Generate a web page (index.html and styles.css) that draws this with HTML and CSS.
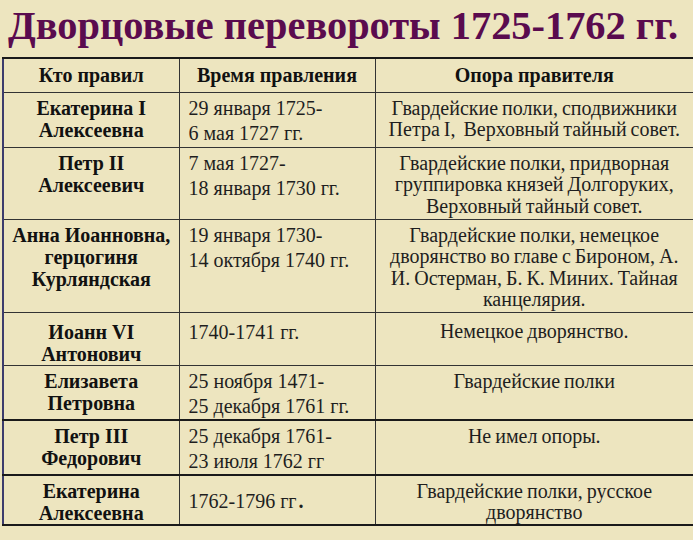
FILE: index.html
```html
<!DOCTYPE html>
<html lang="ru">
<head>
<meta charset="utf-8">
<link rel="stylesheet" href="styles.css">
</head>
<body>
<h1 class="title">Дворцовые перевороты 1725-1762 гг.</h1>
<table class="grid">
<colgroup><col class="c1"><col class="c2"><col class="c3"></colgroup>
<tr class="r-head"><th>Кто правил</th><th>Время правления</th><th>Опора правителя</th></tr>
<tr class="r1"><td class="name">Екатерина I<br>Алексеевна</td><td class="time">29 января 1725-<br>6 мая 1727 гг.</td><td class="base">Гвардейские полки, сподвижники<br>Петра I,&nbsp; Верховный тайный совет.</td></tr>
<tr class="r2"><td class="name">Петр II<br>Алексеевич</td><td class="time">7 мая 1727-<br>18 января 1730 гг.</td><td class="base">Гвардейские полки, придворная<br>группировка князей Долгоруких,<br>Верховный тайный совет.</td></tr>
<tr class="r3"><td class="name">Анна Иоанновна,<br>герцогиня<br>Курляндская</td><td class="time">19 января 1730-<br>14 октября 1740 гг.</td><td class="base">Гвардейские полки, немецкое<br>дворянство во главе с Бироном, А.<br>И. Остерман, Б. К. Миних. Тайная<br>канцелярия.</td></tr>
<tr class="r4"><td class="name">Иоанн VI<br>Антонович</td><td class="time">1740-1741 гг.</td><td class="base">Немецкое дворянство.</td></tr>
<tr class="r5 thick"><td class="name">Елизавета<br>Петровна</td><td class="time">25 ноября 1471-<br>25 декабря 1761 гг.</td><td class="base">Гвардейские полки</td></tr>
<tr class="r6 thick"><td class="name">Петр III<br>Федорович</td><td class="time">25 декабря 1761-<br>23 июля 1762 гг</td><td class="base">Не имел опоры.</td></tr>
<tr class="r7"><td class="name">Екатерина<br>Алексеевна</td><td class="time">1762-1796 гг<span class="dot">.</span></td><td class="base">Гвардейские полки, русское<br>дворянство</td></tr>
</table>
</body>
</html>
```
FILE: styles.css
```css
html, body {
  margin: 0;
  padding: 0;
  background: #ede5bf;
}
body {
  width: 693px;
  height: 540px;
  overflow: hidden;
  font-family: "Liberation Serif", "Times New Roman", serif;
  color: #1a1a1a;
}
.title {
  margin: 0;
  padding: 5px 0 0 8px;
  height: 51px;
  box-sizing: border-box;
  font-family: "Liberation Serif", "Times New Roman", serif;
  font-size: 40.4px;
  line-height: 42px;
  font-weight: bold;
  color: #5a0b4e;
  white-space: nowrap;
}
.grid {
  margin-left: 2px;
  margin-top: 6px;
  width: 690px;
  border-collapse: collapse;
  table-layout: fixed;
  border-top: 2px solid #1a1a1a;
  border-bottom: 2px solid #1a1a1a;
  border-left: 2px solid #3c3c6c;
}
.c1 { width: 176px; }
.c2 { width: 196px; }
.c3 { width: 318px; }
.grid th, .grid td {
  font-family: "Liberation Serif", "Times New Roman", serif;
  border: 1px solid #333;
  vertical-align: top;
  padding: 0;
  font-size: 20px;
  line-height: 22px;
  color: #1e1e1e;
}
.grid tr > :last-child { border-right: none; }
.grid th {
  font-weight: bold;
  text-align: center;
  vertical-align: middle;
  color: #111;
}
.name {
  font-weight: bold;
  text-align: center;
  padding-top: 4px !important;
  color: #111 !important;
}
.time {
  padding: 3px 0 0 9px !important;
  line-height: 25px !important;
}
.base {
  text-align: center;
  padding: 5px 4px 0 4px !important;
  white-space: nowrap;
  word-spacing: -1px;
  line-height: 21.5px !important;
}
.thick td { border-bottom: 2px solid #1a1a1a; }
.r-head { height: 34px; }
.r1 { height: 55px; }
.r2 { height: 72px; }
.r3 { height: 93px; }
.r4 { height: 52px; }
.r5 { height: 54px; }
.r6 { height: 55px; }
.r7 { height: 49px; }
.r4 td { padding-top: 8px !important; }
.r4 .time { padding-top: 7px !important; }
.r4 .base { padding-top: 8px !important; }
.r7 .time { padding-top: 13px !important; }
.r7 .base { padding-top: 5px !important; }
.dot { font-weight: bold; padding-left: 2px; }
```
